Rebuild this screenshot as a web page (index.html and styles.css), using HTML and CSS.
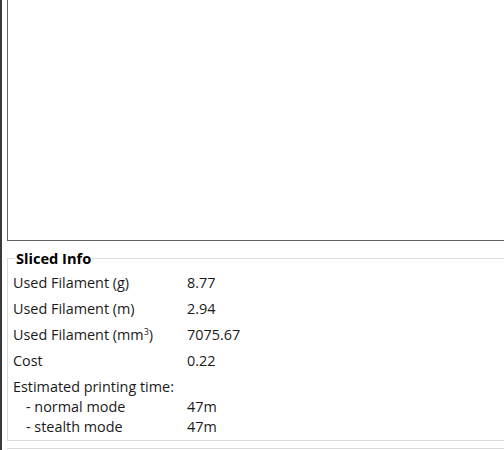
FILE: index.html
```html
<!DOCTYPE html>
<html>
<head>
<meta charset="utf-8">
<link rel="stylesheet" href="styles.css">
</head>
<body>
<div class="app">
  <div class="strip"></div>
  <div class="main">
    <div class="canvas"></div>
    <fieldset class="sliced">
      <legend class="title">Sliced Info</legend>
      <div class="rows">
        <div class="row"><span class="label">Used Filament (g)</span><span class="value">8.77</span></div>
        <div class="row"><span class="label">Used Filament (m)</span><span class="value">2.94</span></div>
        <div class="row"><span class="label">Used Filament (mm<sup>3</sup>)</span><span class="value">7075.67</span></div>
        <div class="row"><span class="label">Cost</span><span class="value">0.22</span></div>
      </div>
      <div class="time">
        <div class="trow"><span class="label">Estimated printing time:</span></div>
        <div class="trow"><span class="label sub">- normal mode</span><span class="value">47m</span></div>
        <div class="trow"><span class="label sub">- stealth mode</span><span class="value">47m</span></div>
      </div>
    </fieldset>
    <div class="next"></div>
  </div>
</div>
</body>
</html>
```
FILE: styles.css
```css
html, body {
  margin: 0;
  padding: 0;
  background: #ffffff;
  width: 504px;
  height: 450px;
  overflow: hidden;
}
.app {
  display: flex;
  height: 450px;
  font-family: "Open Sans", "Noto Sans", sans-serif;
  font-size: 14.4px;
  color: #1a1a1a;
}
.strip {
  width: 2px;
  background: #3a3a3a;
  flex: none;
}
.main {
  flex: 1;
  padding-left: 5px;
  display: flex;
  flex-direction: column;
}
.canvas {
  height: 241px;
  box-sizing: border-box;
  border-left: 1px solid #646464;
  border-bottom: 1px solid #646464;
  flex: none;
}
.sliced {
  margin: 7px 0 0 0;
  padding: 0 0 4px 5px;
  border: 1px solid #dcdcdc;
  border-right: none;
  min-width: 0;
}
.title {
  margin-left: 2px;
  padding: 0 1px;
  font-weight: bold;
  font-size: 14.6px;
  line-height: 20px;
  color: #000;
}
.rows {
  display: flex;
  flex-direction: column;
  padding-top: 1px;
}
.row {
  display: grid;
  grid-template-columns: 174px 1fr;
  height: 26px;
  align-items: center;
}
.time {
  margin-top: 3px;
}
.trow {
  display: grid;
  grid-template-columns: 174px 1fr;
  height: 20px;
  align-items: center;
}
.sub {
  padding-left: 13px;
}
sup {
  font-size: 9px;
  line-height: 0;
  vertical-align: 5px;
}
.next {
  margin-top: 7px;
  border-top: 1px solid #dcdcdc;
  flex: 1;
}
```
